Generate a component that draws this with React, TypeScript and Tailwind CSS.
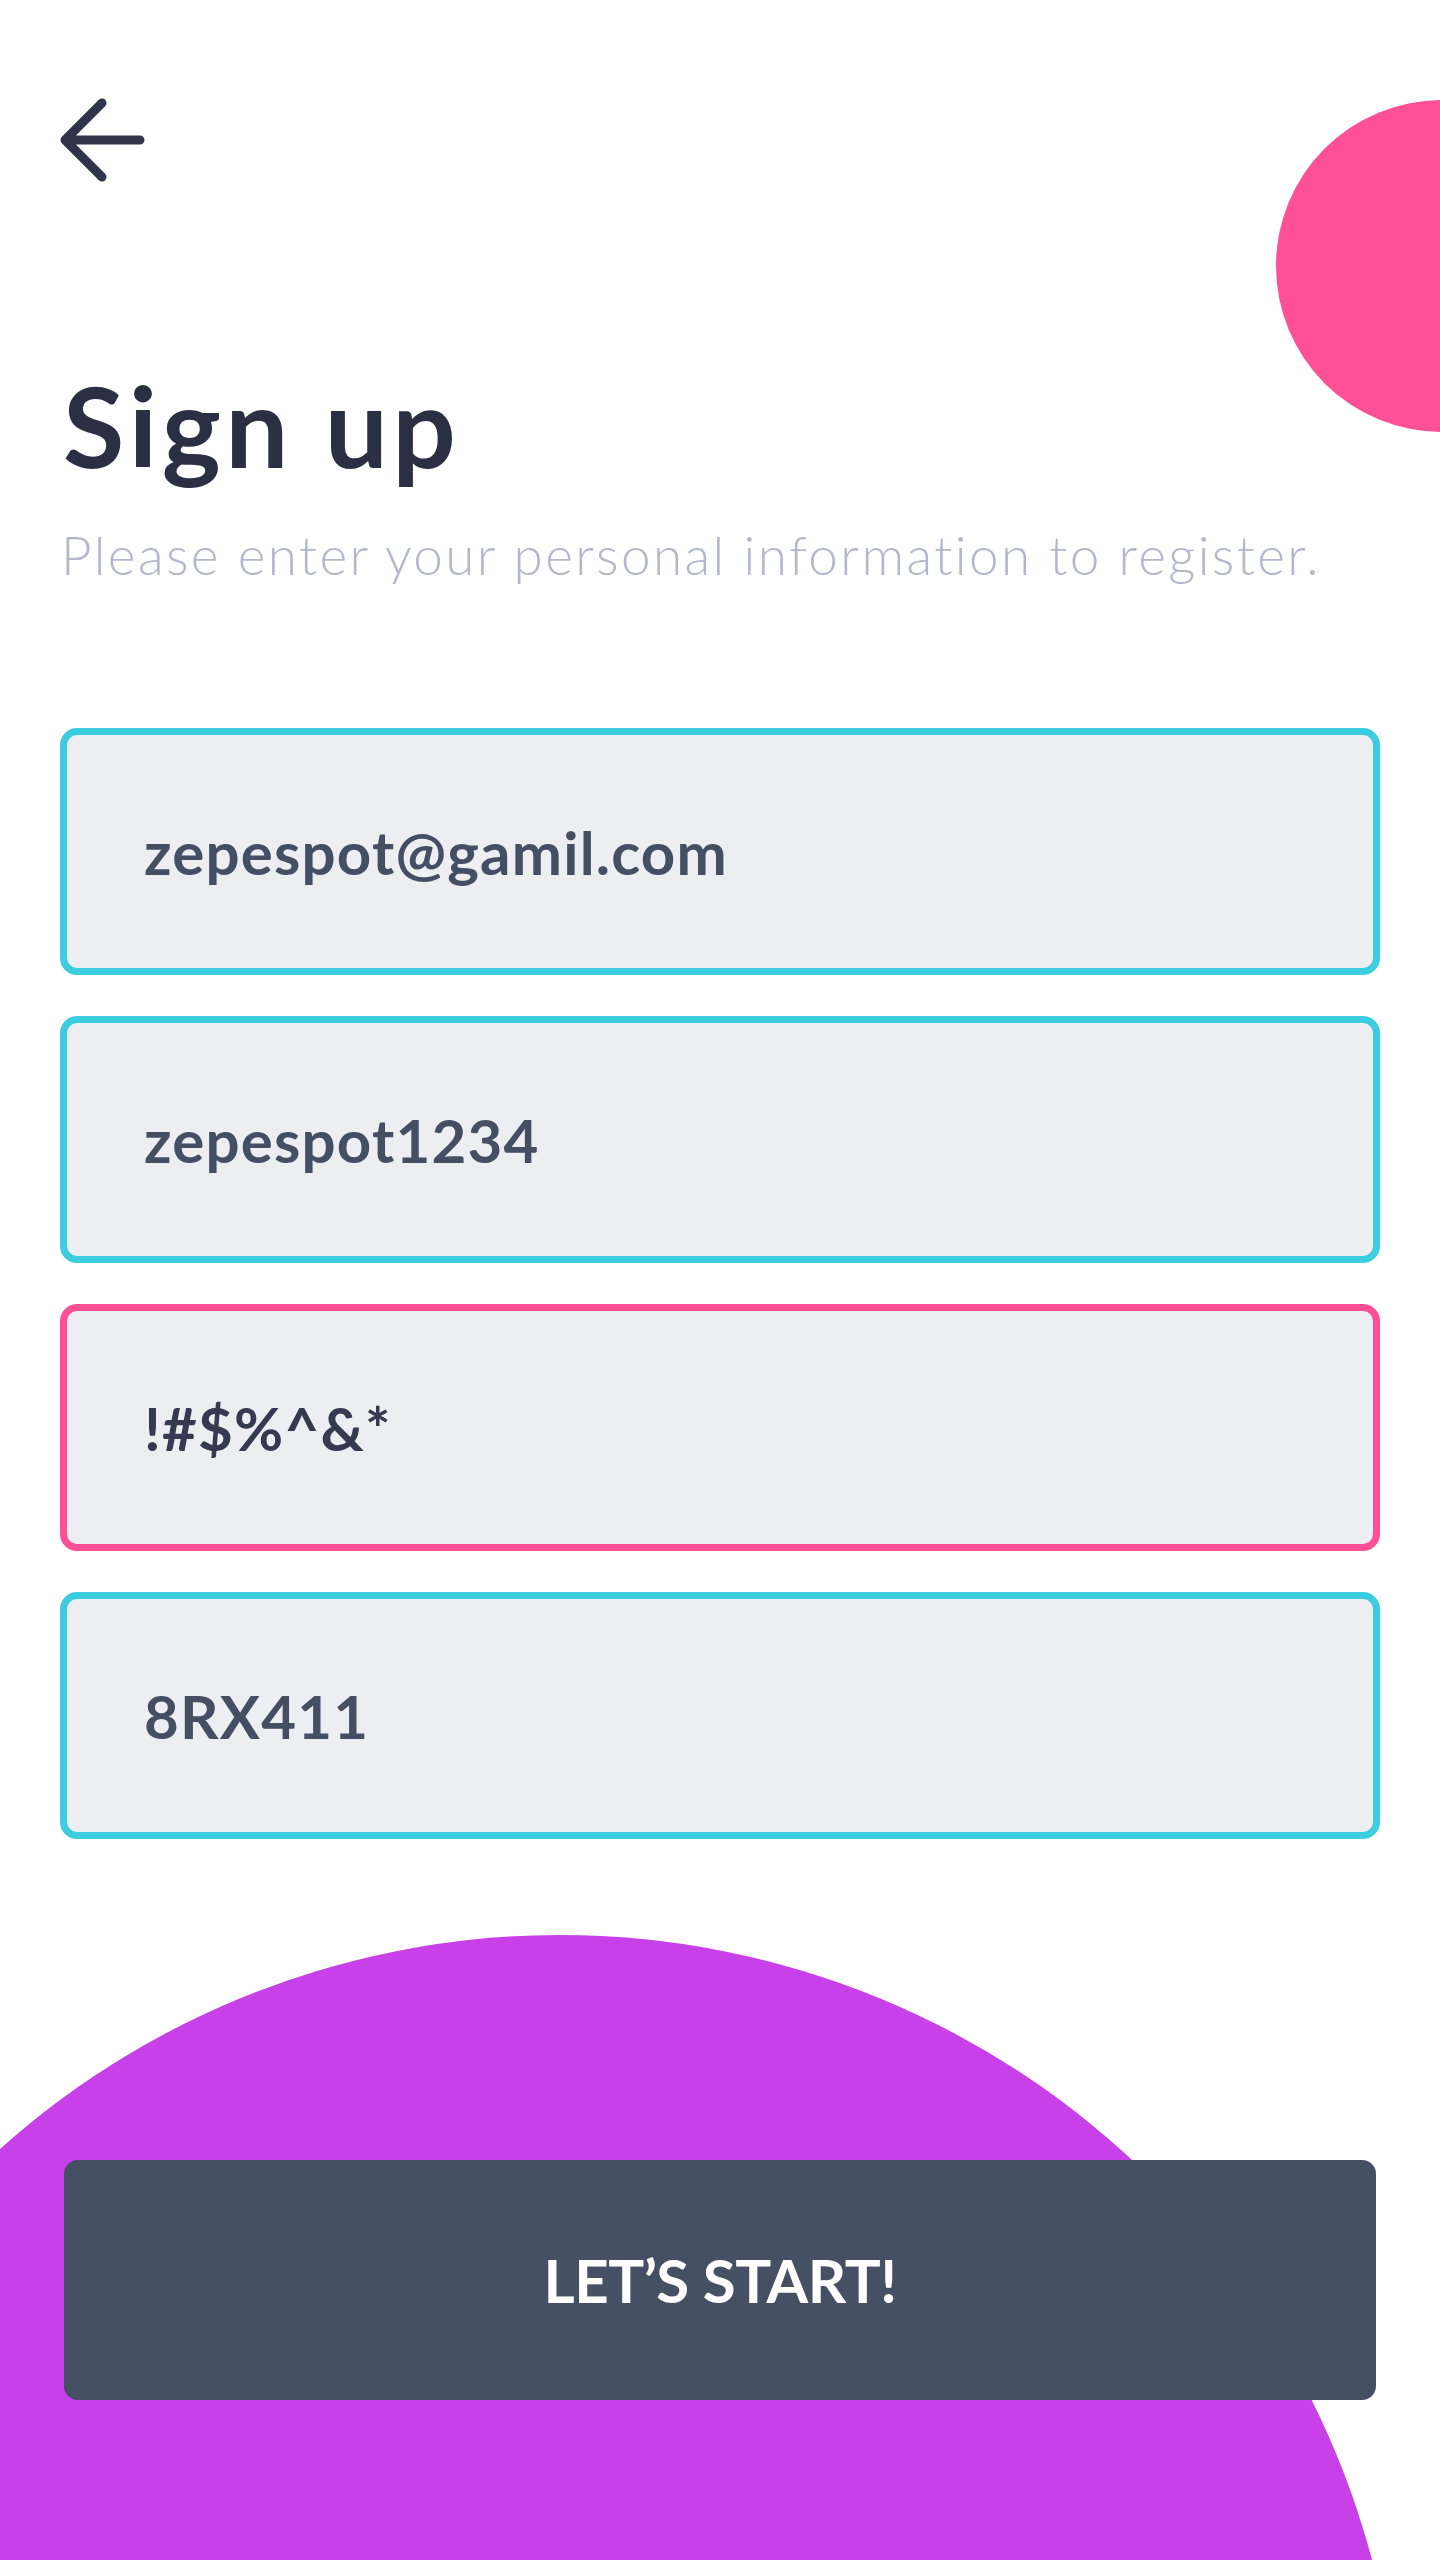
const fields = [
  { value: "zepespot@gamil.com", border: "border-[#3ccde1]", text: "text-[#454f63]" },
  { value: "zepespot1234", border: "border-[#3ccde1]", text: "text-[#454f63]" },
  { value: "!#$%^&*", border: "border-[#ff5096]", text: "text-[#353a51]" },
  { value: "8RX411", border: "border-[#3ccde1]", text: "text-[#454f63]" },
];

function BackArrow() {
  return (
    <svg width="90" height="90" viewBox="0 0 90 90" fill="none">
      <path
        d="M84 45H9M46 8L9 45L46 82"
        stroke="#30344b"
        strokeWidth="9"
        strokeLinecap="round"
        strokeLinejoin="round"
      />
    </svg>
  );
}

export default function App() {
  return (
    <div className="relative w-[1440px] h-[2560px] overflow-hidden bg-white font-['Lato',sans-serif]">
      {/* decorative blobs */}
      <div className="absolute left-[1276px] top-[100px] w-[332px] h-[332px] rounded-full bg-[#ff4f97]" />
      <div className="absolute left-[-280px] top-[1935px] w-[1680px] h-[1680px] rounded-full bg-[#c740e8]" />

      <div className="relative flex flex-col">
        <div className="pt-[95px] pl-[56px]">
          <BackArrow />
        </div>

        <h1 className="mt-[184px] pl-[63px] text-[112px] leading-none font-bold tracking-[4.5px] text-[#2b2f44]">
          Sign up
        </h1>
        <p className="mt-[47px] pl-[61px] text-[53px] leading-none font-light tracking-[2.4px] text-[#b2b7c9]">
          Please enter your personal information to register.
        </p>

        <div className="mt-[147px] px-[60px] flex flex-col gap-[41px]">
          {fields.map((f) => (
            <div
              key={f.value}
              className={`h-[247px] flex items-center rounded-[17px] border-[7px] bg-[#edeef2] pl-[77px] ${f.border}`}
            >
              <span className={`text-[60px] leading-none font-bold tracking-[1.2px] ${f.text}`}>
                {f.value}
              </span>
            </div>
          ))}
        </div>

        <div className="mt-[321px] px-[64px]">
          <button className="w-full h-[240px] rounded-[14px] bg-[#455065] flex items-center justify-center">
            <span className="text-[60px] leading-none font-bold tracking-[-0.5px] text-white">LET’S START!</span>
          </button>
        </div>
      </div>
    </div>
  );
}
